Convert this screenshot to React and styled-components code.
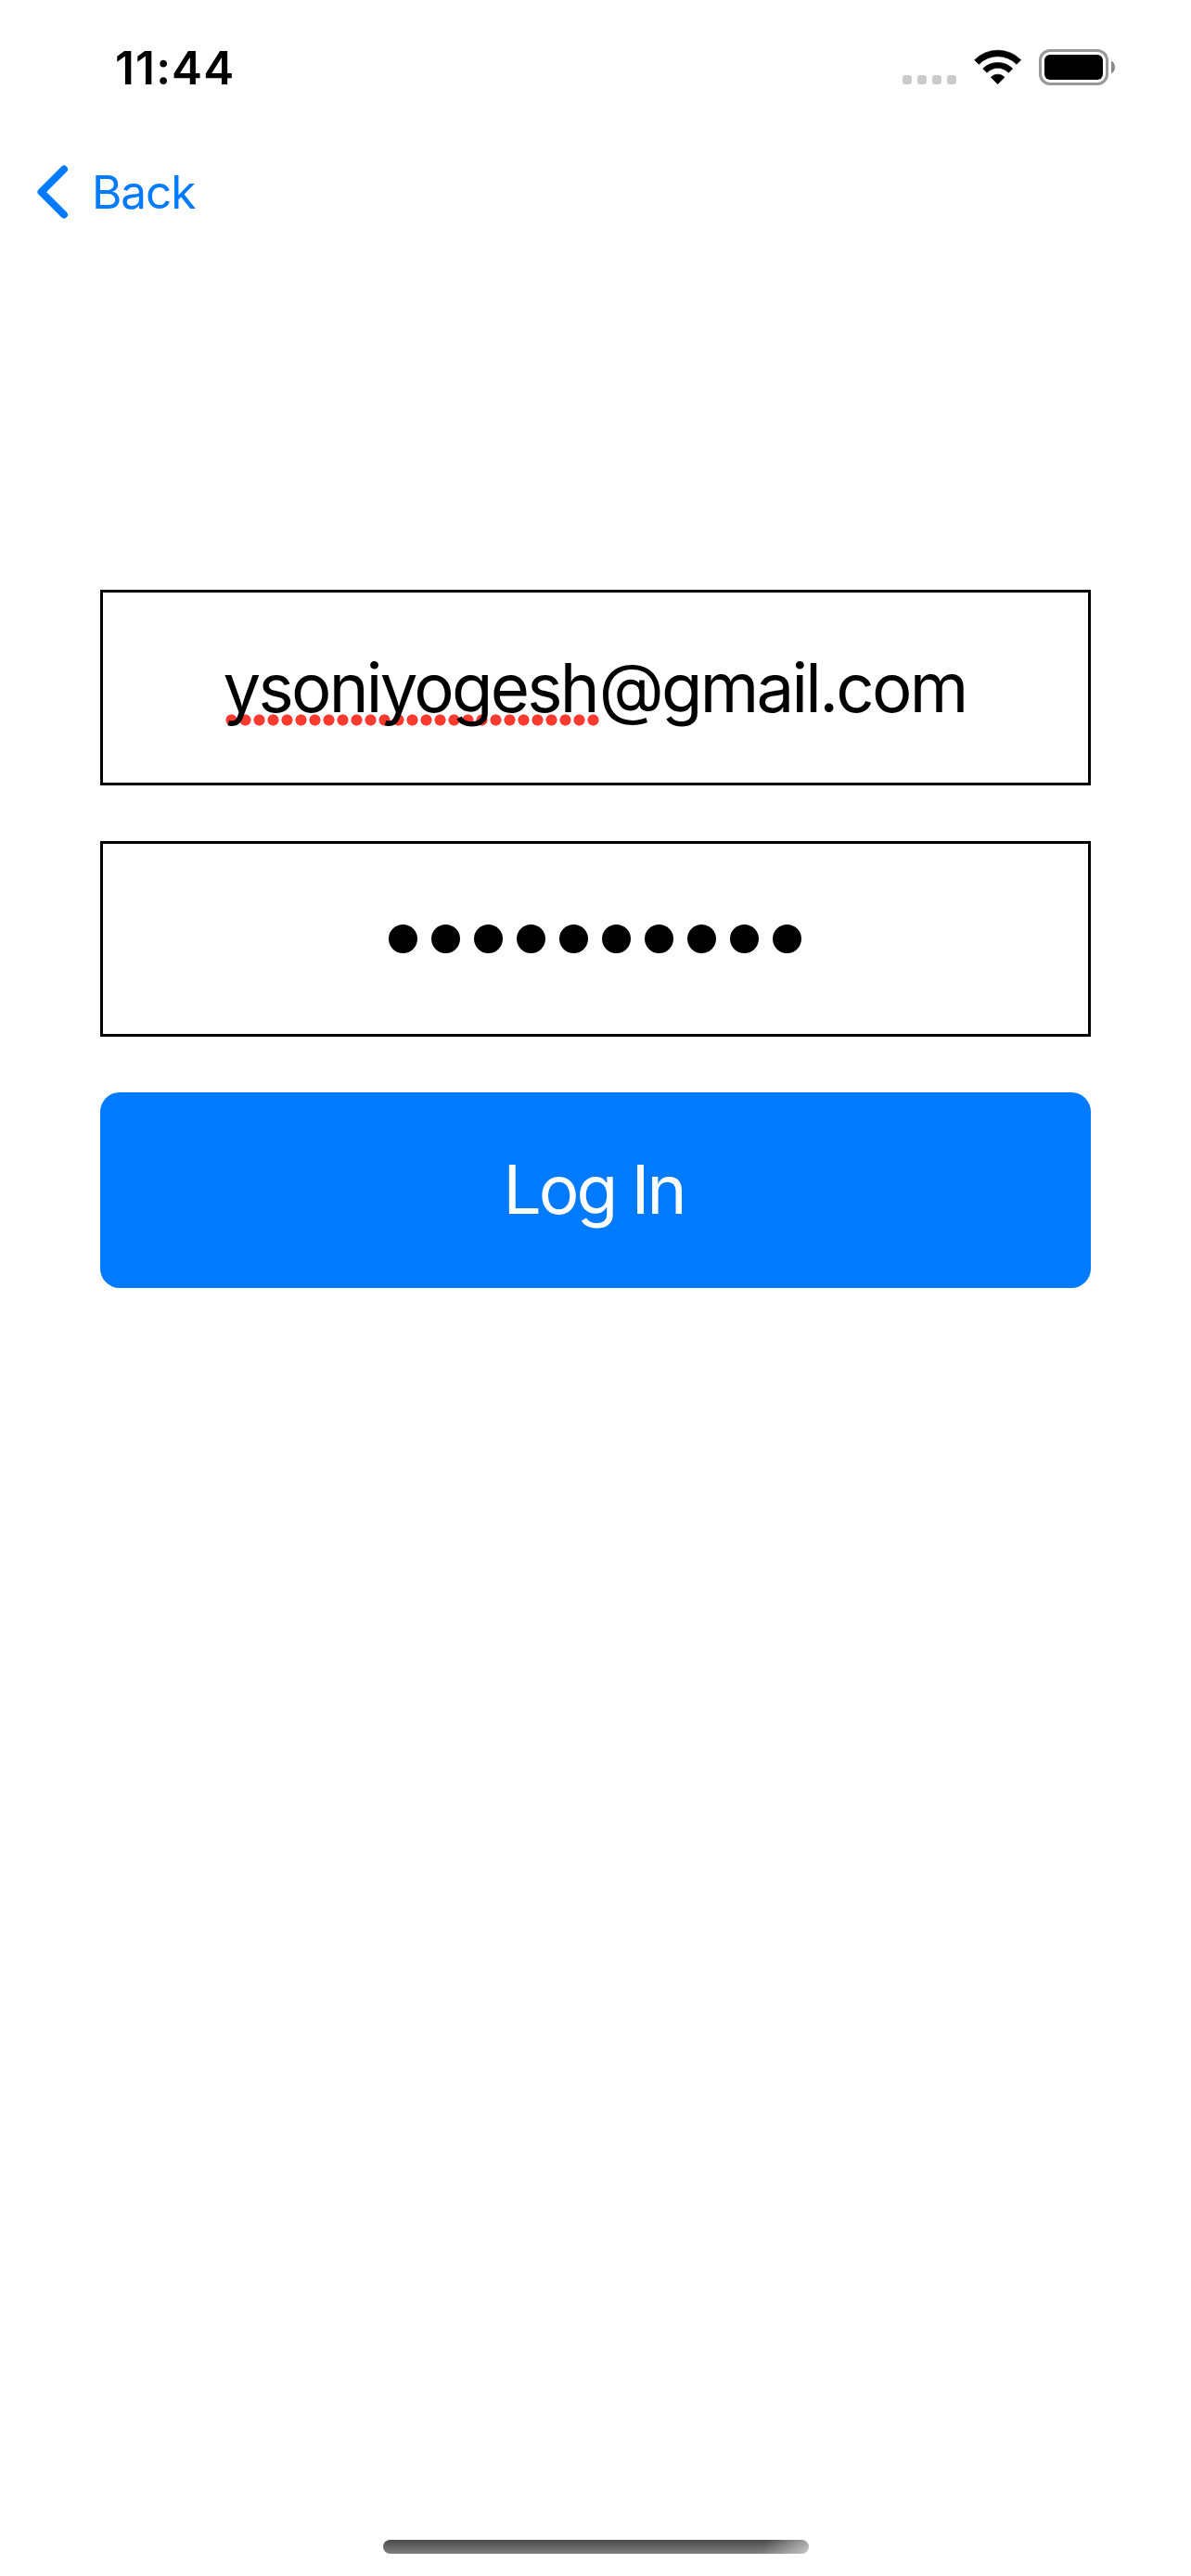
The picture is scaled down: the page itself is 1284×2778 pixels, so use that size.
import React from "react";
import styled, { createGlobalStyle } from "styled-components";

const GlobalStyle = createGlobalStyle`
  *, *::before, *::after { box-sizing: border-box; }
  html, body { margin: 0; background: #fff; }
`;

const Screen = styled.div`
  display: flex;
  flex-direction: column;
  width: 1284px;
  height: 2778px;
  overflow: hidden;
  background: #fff;
  color: #000;
  font-family: Inter, "Liberation Sans", sans-serif;
`;

const StatusBar = styled.header`
  display: flex;
  justify-content: space-between;
  align-items: flex-start;
  height: 146px;
  padding: 53px 82px 0 124px;
`;

const Time = styled.time`
  font-size: 49.5px;
  font-weight: 600;
  line-height: 40px;
  letter-spacing: 1.15px;
`;

const StatusIcons = styled.div`
  display: flex;
  align-items: flex-start;
`;

const Signal = styled.div`
  display: flex;
  gap: 6px;
  margin: 28px 19px 0 0;
`;

const SignalDot = styled.span`
  width: 10px;
  height: 10px;
  border-radius: 3px;
  background: #cbcbcb;
`;

const WifiIcon = styled.svg`
  width: 52px;
  height: 39px;
  margin-right: 18px;
`;

const Battery = styled.div`
  display: flex;
  align-items: center;
  gap: 3px;
`;

const BatteryShell = styled.div`
  display: flex;
  width: 75px;
  height: 39px;
  padding: 3px;
  border: 3px solid #999;
  border-radius: 12px;
`;

const BatteryLevel = styled.div`
  flex: 1;
  border-radius: 6px;
  background: #000;
`;

const BatteryCap = styled.div`
  width: 4px;
  height: 13px;
  border-radius: 0 4px 4px 0 / 0 6.5px 6.5px 0;
  background: #8a8a8a;
`;

const NavBar = styled.nav`
  display: flex;
  align-items: center;
  height: 122px;
  padding-left: 38px;
`;

const BackButton = styled.button`
  display: flex;
  align-items: center;
  gap: 24px;
  padding: 0;
  border: 0;
  background: none;
  color: #007aff;
  font-family: inherit;
  font-size: 49.5px;
  line-height: 60px;
  letter-spacing: -1.1px;
`;

const Chevron = styled.svg`
  width: 37px;
  height: 60px;
`;

const Form = styled.main`
  display: flex;
  flex: 1;
  flex-direction: column;
  gap: 60px;
  padding: 368px 108px 0;
`;

const Field = styled.div`
  display: flex;
  align-items: center;
  justify-content: center;
  height: 211px;
  border: 3px solid #000;
  font-size: 72.5px;
  line-height: 88px;
  letter-spacing: -2.75px;
  white-space: nowrap;
`;

const Misspelled = styled.span`
  position: relative;
  z-index: 0;

  &::after {
    content: "";
    position: absolute;
    z-index: -1;
    left: 1px;
    top: 72px;
    width: 405px;
    height: 13px;
    background: radial-gradient(circle at 50% 50%, #ff3b30 5.7px, transparent 6.4px) 0 0 / 15px 13px repeat-x;
  }
`;

const Domain = styled.span`
  margin: 0 2px;
`;

const Mask = styled.div`
  display: flex;
  gap: 14.9px;
  margin-right: 1px;
`;

const MaskDot = styled.span`
  width: 31px;
  height: 31px;
  border-radius: 50%;
  background: #000;
`;

const LoginButton = styled.button`
  height: 211px;
  padding: 0 4px 2px 0;
  border: 0;
  border-radius: 21px;
  background: #007aff;
  color: #fff;
  font-family: inherit;
  font-size: 73px;
  line-height: 88px;
  letter-spacing: -3px;
`;

const HomeArea = styled.footer`
  display: flex;
  justify-content: center;
  height: 39px;
`;

const HomeIndicator = styled.div`
  width: 459px;
  height: 15px;
  border-radius: 8px;
  background:
    linear-gradient(110deg, transparent 89%, rgba(255, 255, 255, 0.55) 100%),
    linear-gradient(#4a4a4a, #808080);
`;

function App() {
  return (
    <>
      <GlobalStyle />
      <Screen>
        <StatusBar>
          <Time>11:44</Time>
          <StatusIcons>
            <Signal>
              {[0, 1, 2, 3].map((i) => (
                <SignalDot key={i} />
              ))}
            </Signal>
            <WifiIcon viewBox="300 69 156 117" aria-label="Wi-Fi">
              <g stroke="#000" strokeWidth="2" strokeLinejoin="round">
                <path d="M302 104A105 105 0 0 1 452 104L438 118A85 85 0 0 0 316 118Z" />
                <path d="M329 132A68 68 0 0 1 425 132L412 145A48.500 48.500 0 0 0 342 145Z" />
                <path d="M355 160A30 30 0 0 1 399 160L377 182Z" />
              </g>
            </WifiIcon>
            <Battery>
              <BatteryShell>
                <BatteryLevel />
              </BatteryShell>
              <BatteryCap />
            </Battery>
          </StatusIcons>
        </StatusBar>

        <NavBar>
          <BackButton type="button">
            <Chevron viewBox="0 0 37 60" fill="none" aria-hidden="true">
              <path
                d="M31 5.500L6.500 30L31 54.500"
                stroke="currentColor"
                strokeWidth="8"
                strokeLinecap="round"
                strokeLinejoin="round"
              />
            </Chevron>
            Back
          </BackButton>
        </NavBar>

        <Form>
          <Field>
            <Misspelled>ysoniyogesh</Misspelled>
            <Domain>@gmail.com</Domain>
          </Field>
          <Field>
            <Mask aria-label="Password">
              {Array.from({ length: 10 }, (_, i) => (
                <MaskDot key={i} />
              ))}
            </Mask>
          </Field>
          <LoginButton type="button">Log In</LoginButton>
        </Form>

        <HomeArea>
          <HomeIndicator />
        </HomeArea>
      </Screen>
    </>
  );
}

export default App;
